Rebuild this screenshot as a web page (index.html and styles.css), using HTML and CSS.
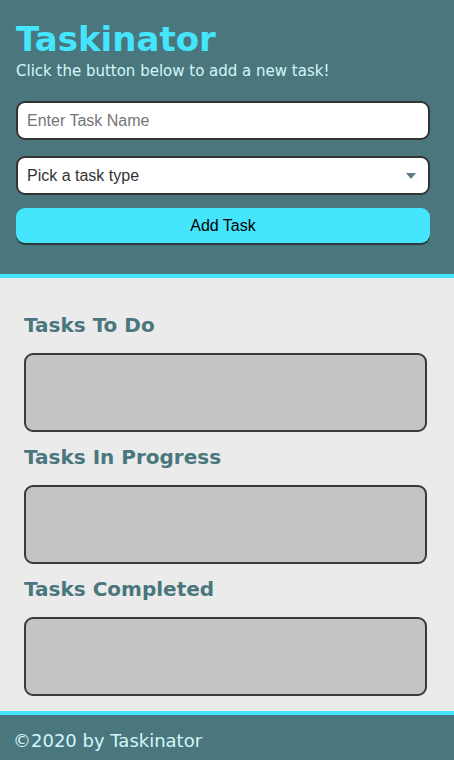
FILE: index.html
```html
<!DOCTYPE html>
<html lang="en">
<head>
<meta charset="utf-8">
<title>Taskinator</title>
<link rel="stylesheet" href="styles.css">
</head>
<body>
<header class="header">
  <h1 class="title">Taskinator</h1>
  <p class="subtitle">Click the button below to add a new task!</p>
  <form class="task-form">
    <input class="field" type="text" placeholder="Enter Task Name">
    <div class="select-wrap">
      <select class="field select">
        <option>Pick a task type</option>
      </select>
      <svg class="arrow" width="10" height="6" viewBox="0 0 10 6"><path d="M0 0H10L5 6Z" fill="#5a7f86"/></svg>
    </div>
    <button class="btn" type="button">Add Task</button>
  </form>
</header>
<main class="main">
  <section class="column">
    <h2 class="col-title">Tasks To Do</h2>
    <div class="list"></div>
  </section>
  <section class="column">
    <h2 class="col-title">Tasks In Progress</h2>
    <div class="list"></div>
  </section>
  <section class="column">
    <h2 class="col-title">Tasks Completed</h2>
    <div class="list"></div>
  </section>
</main>
<footer class="footer">©2020 by Taskinator</footer>
</body>
</html>
```
FILE: styles.css
```css
* { box-sizing: border-box; }
html, body { margin: 0; padding: 0; }
body {
  font-family: "DejaVu Sans", Verdana, sans-serif;
  background: #ebebeb;
  width: 454px;
  height: 760px;
  display: flex;
  flex-direction: column;
  overflow: hidden;
}
.header {
  flex-shrink: 0;
  background: #4a777d;
  border-bottom: 4px solid #45e6fd;
  padding: 17px 24px 31px 16px;
}
.title {
  margin: 0;
  font-size: 34px;
  line-height: 44px;
  font-weight: bold;
  color: #45e6fd;
}
.subtitle {
  margin: 0 0 20px;
  font-size: 15px;
  line-height: 20px;
  color: #d4f6fa;
}
.task-form {
  display: flex;
  flex-direction: column;
}
.field {
  display: block;
  width: 100%;
  height: 39px;
  border: 2px solid #333;
  border-radius: 9px;
  background: #fff;
  font-family: "Liberation Sans", Arial, sans-serif;
  font-size: 16px;
  padding: 0 9px;
  color: #333;
}
.field::placeholder { color: #757575; }
.select-wrap {
  position: relative;
  margin-top: 16px;
}
.select {
  appearance: none;
  -webkit-appearance: none;
}
.arrow {
  position: absolute;
  right: 14px;
  top: 17px;
  pointer-events: none;
}
.btn {
  margin-top: 13px;
  height: 35px;
  width: 100%;
  border: none;
  border-radius: 9px;
  background: #45e6fd;
  box-shadow: 0 2px 0 #2e3a3c;
  font-family: "Liberation Sans", Arial, sans-serif;
  font-size: 16px;
  color: #000;
}
.main {
  flex: 1;
  padding: 34px 27px 0 24px;
}
.column { margin: 0; }
.col-title {
  margin: 0 0 15px;
  font-size: 20px;
  line-height: 26px;
  font-weight: bold;
  color: #4a777d;
}
.list {
  height: 79px;
  background: #c4c4c4;
  border: 2px solid #3a3a3a;
  border-radius: 9px;
  margin-bottom: 12px;
}
.footer {
  flex-shrink: 0;
  background: #4a777d;
  border-top: 4px solid #45e6fd;
  height: 49px;
  padding: 14px 13px 0;
  font-size: 18px;
  line-height: 24px;
  color: #d4f6fa;
}
```
